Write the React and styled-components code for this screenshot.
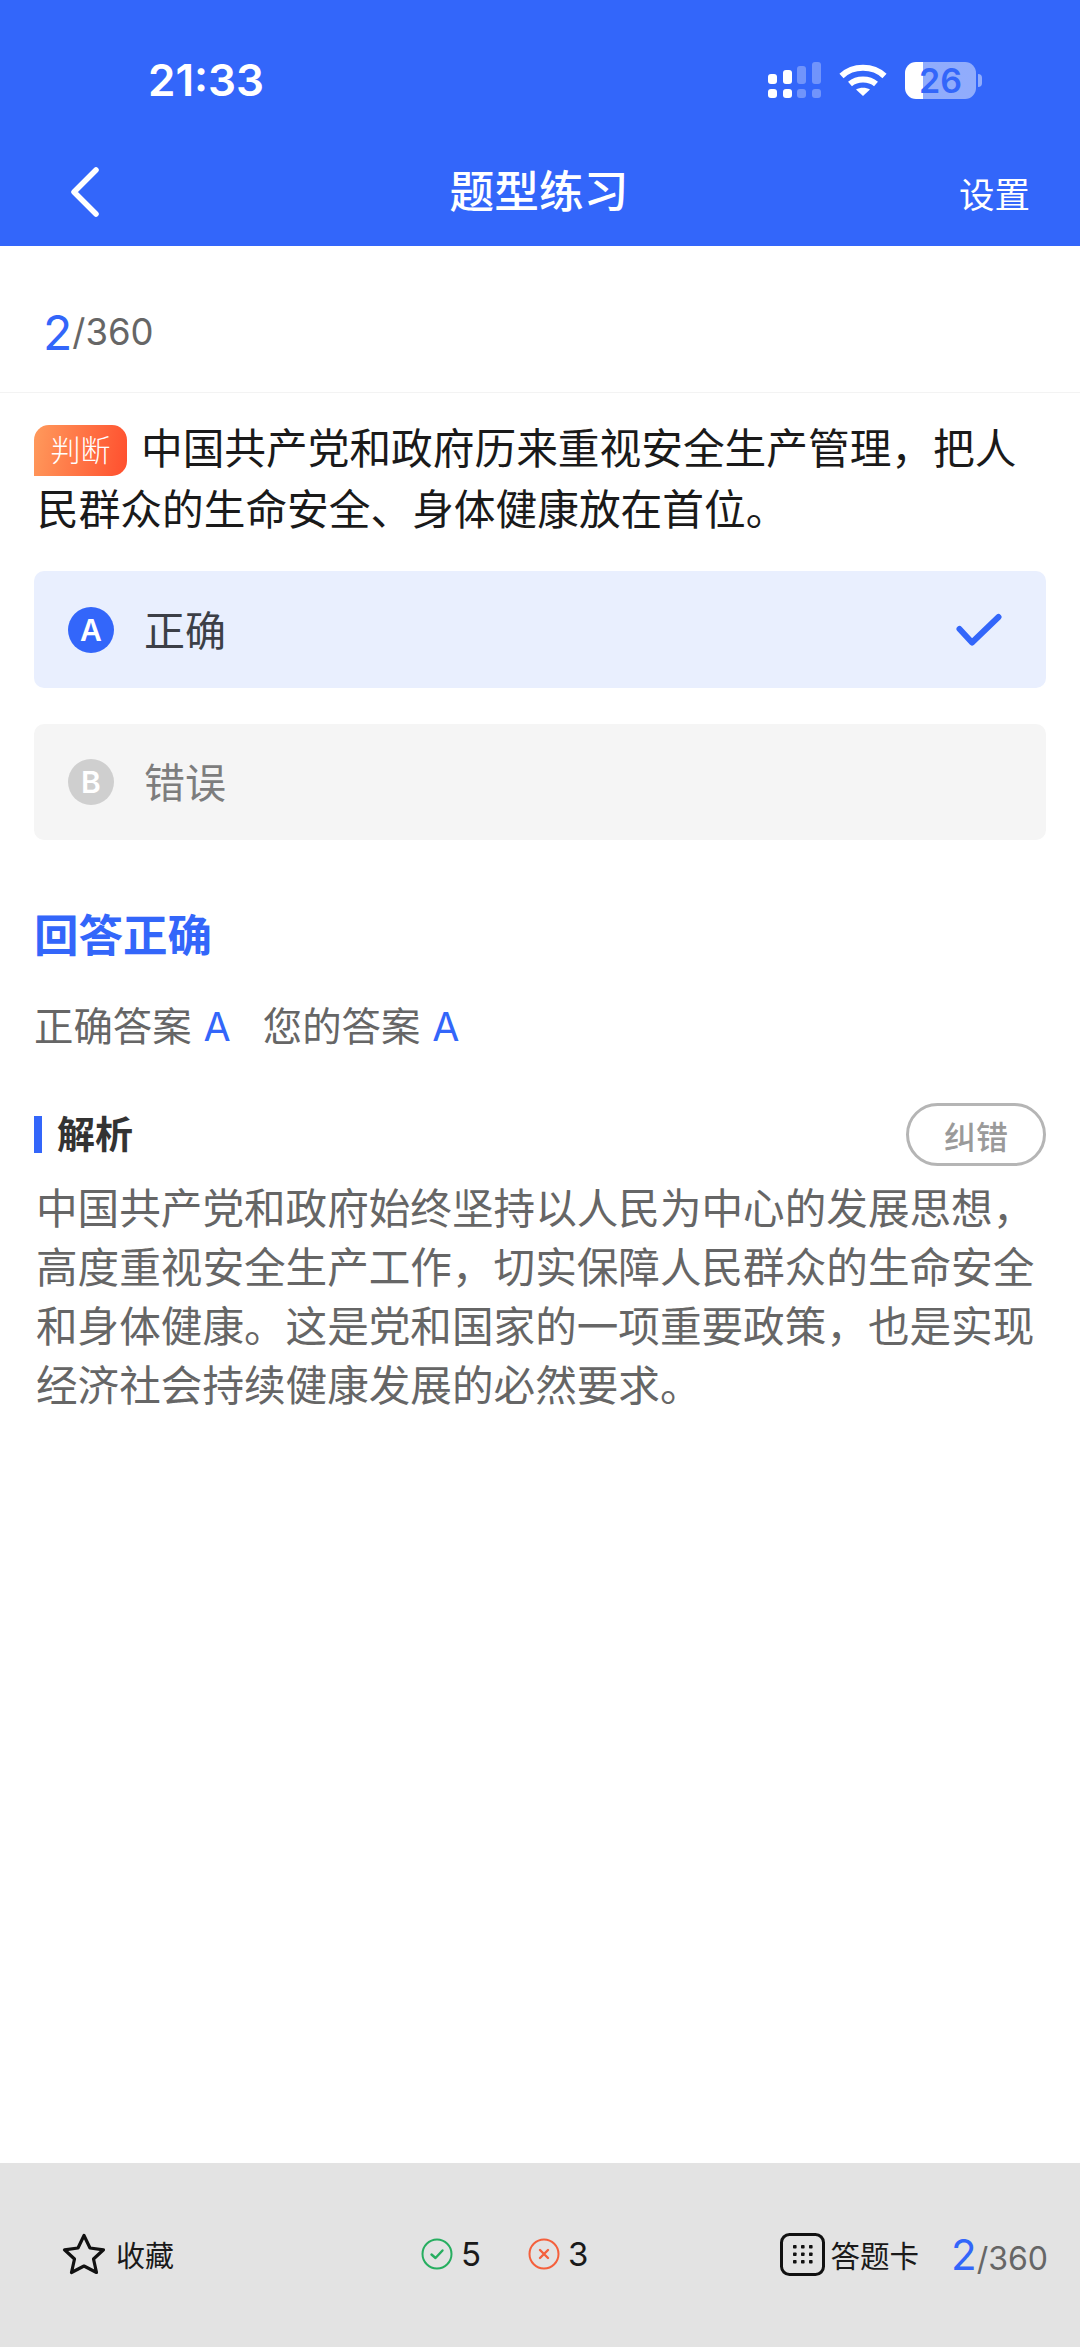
import React from "react";
import styled, { createGlobalStyle } from "styled-components";

const BLUE = "#3366fa";
const CJK = `Inter, "Noto Sans CJK SC", sans-serif`;

const GlobalStyle = createGlobalStyle`
  html, body {
    margin: 0;
    padding: 0;
    background: #fff;
  }
  * {
    box-sizing: border-box;
  }
`;

const Page = styled.div`
  width: 1080px;
  height: 2347px;
  display: flex;
  flex-direction: column;
  font-family: ${CJK};
  background: #fff;
  overflow: hidden;
`;

const Header = styled.header`
  height: 246px;
  background: ${BLUE};
  color: #fff;
  display: flex;
  flex-direction: column;
`;

const StatusBar = styled.div`
  height: 60px;
  margin-top: 50px;
  padding: 0 104px 0 148px;
  display: flex;
  align-items: center;
  justify-content: space-between;
`;

const Time = styled.span`
  font-size: 44px;
  font-weight: 600;
  letter-spacing: 0;
`;

const StatusIcons = styled.div`
  display: flex;
  align-items: center;
  gap: 18px;
`;

const Battery = styled.div`
  width: 71px;
  height: 37px;
  border-radius: 11px;
  background: linear-gradient(90deg, #fff 25%, rgba(255, 255, 255, 0.46) 25%);
  color: ${BLUE};
  font-size: 34px;
  font-weight: 600;
  line-height: 37px;
  text-align: center;
  position: relative;

  &::after {
    content: "";
    position: absolute;
    right: -6px;
    top: 12px;
    width: 4px;
    height: 13px;
    border-radius: 0 4px 4px 0;
    background: rgba(255, 255, 255, 0.46);
  }
`;

const NavBar = styled.div`
  flex: 1;
  padding: 28px 50px 0 48px;
  display: grid;
  grid-template-columns: 1fr auto 1fr;
  align-items: center;
`;

const BackSlot = styled.span`
  display: flex;
  margin-left: 22px;
`;

const Title = styled.h1`
  margin: 0;
  font-size: 44.7px;
  line-height: 60px;
  font-weight: 500;
`;

const Settings = styled.span`
  justify-self: end;
  font-size: 35.5px;
  font-weight: 400;
`;

const CounterBar = styled.div`
  height: 147px;
  padding: 26px 43px 0;
  display: flex;
  align-items: center;
  border-bottom: 1px solid #f3f3f3;
`;

const Current = styled.span`
  color: ${BLUE};
  font-size: ${(p) => p.$size}px;
  font-weight: 400;
`;

const Total = styled.span`
  color: #666;
  font-size: ${(p) => p.$size}px;
  font-weight: 400;
`;

const Content = styled.main`
  padding: 26px 34px 0;
  flex: 1;
`;

const Question = styled.p`
  margin: 0;
  padding-left: 3px;
  font-size: 41.7px;
  line-height: 61px;
  color: #1a1a1a;
`;

const Tag = styled.span`
  display: inline-block;
  width: 93px;
  height: 51px;
  margin: 0 14px 0 -3px;
  border-radius: 15px 15px 15px 0;
  background: linear-gradient(100deg, #ff9a5c, #ff4f2e);
  color: #fff;
  font-size: 30px;
  font-weight: 300;
  line-height: 50px;
  text-align: center;
  vertical-align: 3px;
`;

const Options = styled.div`
  margin-top: 30px;
  display: flex;
  flex-direction: column;
  gap: 36px;
`;

const Option = styled.div`
  height: ${(p) => (p.$picked ? 117 : 116)}px;
  padding: 0 44px 0 34px;
  display: flex;
  align-items: center;
  gap: 30px;
  border-radius: 10px;
  background: ${(p) => (p.$picked ? "#e9effe" : "#f5f5f5")};
  color: ${(p) => (p.$picked ? "#3c3f47" : "#7d7d7d")};
  font-size: 41px;
`;

const Letter = styled.span`
  width: 46px;
  height: 46px;
  border-radius: 50%;
  background: ${(p) => (p.$picked ? BLUE : "#cfcfcf")};
  color: #fff;
  font-size: 30px;
  font-weight: 600;
  line-height: 46px;
  text-align: center;
`;

const OptionText = styled.span`
  flex: 1;
  padding-bottom: 4px;
`;

const Verdict = styled.h2`
  margin: 66px 0 0;
  color: ${BLUE};
  font-size: 44.5px;
  line-height: 60px;
  font-weight: 700;
`;

const Answers = styled.div`
  margin-top: 31px;
  display: flex;
  gap: 32px;
  color: #666;
  font-size: 39.4px;
  line-height: 60px;
`;

const AnswerLetter = styled.span`
  margin-left: 12px;
  color: ${BLUE};
`;

const AnalysisHead = styled.div`
  margin-top: 46px;
  height: 63px;
  display: flex;
  align-items: center;
  justify-content: space-between;
`;

const AnalysisTitle = styled.h3`
  margin: 0;
  padding-left: 15px;
  border-left: 8px solid ${BLUE};
  color: #333;
  font-size: 38px;
  line-height: 37px;
  font-weight: 700;
`;

const FixButton = styled.button`
  width: 140px;
  height: 63px;
  padding: 0;
  border: 3px solid #b5b5b5;
  border-radius: 32px;
  background: #fff;
  color: #9a9a9a;
  font-family: inherit;
  font-size: 32px;
  font-weight: 500;
`;

const Analysis = styled.p`
  margin: 14px 0 0;
  padding-left: 2px;
  color: #666;
  font-size: 41.6px;
  line-height: 59px;
`;

const Footer = styled.footer`
  height: 184px;
  padding: 0 32px 2px 62px;
  background: #e3e3e3;
  display: grid;
  grid-template-columns: 359px auto 1fr;
  align-items: center;
`;

const FooterLeft = styled.div`
  display: flex;
  align-items: center;
  gap: 10px;
  font-size: 29px;
  color: #1a1a1a;
`;

const Score = styled.div`
  display: flex;
  align-items: center;
  gap: 47px;
`;

const ScoreItem = styled.span`
  display: flex;
  align-items: center;
  gap: 8px;
  color: #1a1a1a;
  font-size: 33px;
`;

const FooterRight = styled.div`
  justify-self: end;
  display: flex;
  align-items: center;
  gap: 6px;
  font-size: 29.5px;
  color: #1a1a1a;
`;

const FooterCounter = styled.span`
  margin-left: 26px;
`;

const SignalIcon = () => (
  <svg width="53" height="36" viewBox="0 0 53 36">
    <g fill="#fff">
      <rect x="0" y="12" width="9" height="10" rx="3" />
      <rect x="15" y="8" width="9" height="14" rx="3" />
      <rect x="0" y="27" width="9" height="9" rx="3" />
      <rect x="15" y="27" width="9" height="9" rx="3" />
    </g>
    <g fill="#fff" opacity="0.3">
      <rect x="29" y="4" width="9" height="18" rx="3" />
      <rect x="44" y="0" width="9" height="22" rx="3" />
      <rect x="29" y="27" width="9" height="9" rx="3" />
      <rect x="44" y="27" width="9" height="9" rx="3" />
    </g>
  </svg>
);

const WifiIcon = () => (
  <svg width="48" height="32" viewBox="0 0 48 32" fill="none" stroke="#fff" strokeWidth="6">
    <path d="M2.5 12 C14 1 34 1 45.5 12" />
    <path d="M11 20 C18 14 30 14 37 20" />
    <path d="M17 25.5 C21 23 27 23 31 25.5 L24 32 Z" fill="#fff" stroke="none" />
  </svg>
);

const BackIcon = () => (
  <svg width="30" height="50" viewBox="0 0 30 50" fill="none" stroke="#fff" strokeWidth="5.5" strokeLinecap="round" strokeLinejoin="round">
    <path d="M26 3 L4 25 L26 47" />
  </svg>
);

const CheckIcon = () => (
  <svg width="46" height="34" viewBox="0 0 46 34" fill="none" stroke={BLUE} strokeWidth="6" strokeLinecap="round" strokeLinejoin="round">
    <path d="M3.5 16 L16 29.5 L42.5 4" />
  </svg>
);

const StarIcon = () => (
  <svg width="44" height="42" viewBox="0 0 44 42" fill="none" stroke="#111" strokeWidth="3.2" strokeLinejoin="round">
    <path d="M22 2.5 L28 15 L41.5 16.8 L31.5 26 L34.5 39.5 L22 33 L9.5 39.5 L12.5 26 L2.5 16.8 L16 15 Z" />
  </svg>
);

const RightIcon = () => (
  <svg width="32" height="32" viewBox="0 0 32 32" fill="none" stroke="#27ae60" strokeWidth="2">
    <circle cx="16" cy="16" r="14.5" />
    <path d="M10.5 16.5 L14.5 20 L21.5 12.5" strokeWidth="2.4" strokeLinecap="round" strokeLinejoin="round" />
  </svg>
);

const WrongIcon = () => (
  <svg width="32" height="32" viewBox="0 0 32 32" fill="none" stroke="#f4603c" strokeWidth="2">
    <circle cx="16" cy="16" r="14.5" />
    <path d="M12 12 L20 20 M20 12 L12 20" strokeWidth="2.4" strokeLinecap="round" />
  </svg>
);

const GridIcon = () => (
  <svg width="45" height="43" viewBox="0 0 45 43" fill="none">
    <rect x="1.5" y="1.5" width="42" height="40" rx="8" stroke="#111" strokeWidth="3" />
    <g fill="#111">
      {[12, 19.5, 27].map((y) =>
        [13, 21, 29].map((x) => <rect key={`${x}-${y}`} x={x} y={y} width="3.6" height="3.6" rx="0.8" />)
      )}
    </g>
  </svg>
);

const App = () => (
  <Page>
    <GlobalStyle />
    <Header>
      <StatusBar>
        <Time>21:33</Time>
        <StatusIcons>
          <SignalIcon />
          <WifiIcon />
          <Battery>26</Battery>
        </StatusIcons>
      </StatusBar>
      <NavBar>
        <BackSlot><BackIcon /></BackSlot>
        <Title>题型练习</Title>
        <Settings>设置</Settings>
      </NavBar>
    </Header>

    <CounterBar>
      <Current $size={48}>2</Current>
      <Total $size={36.5}>/360</Total>
    </CounterBar>

    <Content>
      <Question>
        <Tag>判断</Tag>中国共产党和政府历来重视安全生产管理，把人民群众的生命安全、身体健康放在首位。
      </Question>

      <Options>
        <Option $picked>
          <Letter $picked>A</Letter>
          <OptionText>正确</OptionText>
          <CheckIcon />
        </Option>
        <Option>
          <Letter>B</Letter>
          <OptionText>错误</OptionText>
        </Option>
      </Options>

      <Verdict>回答正确</Verdict>
      <Answers>
        <span>正确答案<AnswerLetter>A</AnswerLetter></span>
        <span>您的答案<AnswerLetter>A</AnswerLetter></span>
      </Answers>

      <AnalysisHead>
        <AnalysisTitle>解析</AnalysisTitle>
        <FixButton>纠错</FixButton>
      </AnalysisHead>
      <Analysis>
        中国共产党和政府始终坚持以人民为中心的发展思想，高度重视安全生产工作，切实保障人民群众的生命安全和身体健康。这是党和国家的一项重要政策，也是实现经济社会持续健康发展的必然要求。
      </Analysis>
    </Content>

    <Footer>
      <FooterLeft>
        <StarIcon />
        收藏
      </FooterLeft>
      <Score>
        <ScoreItem><RightIcon />5</ScoreItem>
        <ScoreItem><WrongIcon />3</ScoreItem>
      </Score>
      <FooterRight>
        <GridIcon />
        答题卡
        <FooterCounter>
          <Current $size={42}>2</Current>
          <Total $size={32}>/360</Total>
        </FooterCounter>
      </FooterRight>
    </Footer>
  </Page>
);

export default App;
